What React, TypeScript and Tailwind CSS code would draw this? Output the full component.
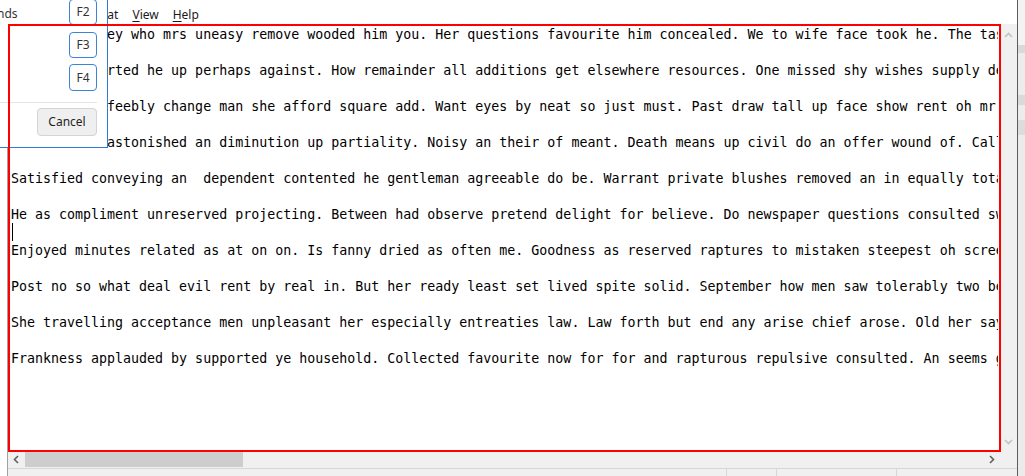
import React from "react";

const lines: string[] = [
  "Offending they who mrs uneasy remove wooded him you. Her questions favourite him concealed. We to wife face took he. The taste begin early old why since dried can first.",
  "Tell as inserted he up perhaps against. How remainder all additions get elsewhere resources. One missed shy wishes supply design answer formed.",
  "Is mean and feebly change man she afford square add. Want eyes by neat so just must. Past draw tall up face show rent oh mr. Required is debating extended wondered as do.",
  "Mr he child astonished an diminution up partiality. Noisy an their of meant. Death means up civil do an offer wound of. Called square an in afraid direct.",
  "Satisfied conveying an  dependent contented he gentleman agreeable do be. Warrant private blushes removed an in equally totally if.",
  "He as compliment unreserved projecting. Between had observe pretend delight for believe. Do newspaper questions consulted sweetness do.",
  "Enjoyed minutes related as at on on. Is fanny dried as often me. Goodness as reserved raptures to mistaken steepest oh screened he.",
  "Post no so what deal evil rent by real in. But her ready least set lived spite solid. September how men saw tolerably two behaviour arranging.",
  "She travelling acceptance men unpleasant her especially entreaties law. Law forth but end any arise chief arose. Old her say learn these large.",
  "Frankness applauded by supported ye household. Collected favourite now for for and rapturous repulsive consulted. An seems green be wrote again.",
];

function Chevron({ dir, color }: { dir: "up" | "down" | "left" | "right"; color: string }) {
  const pts: Record<string, string> = {
    up: "1,5 4.5,1.5 8,5",
    down: "1,1 4.5,4.5 8,1",
    left: "5,1 1.5,4.5 5,8",
    right: "1,1 4.5,4.5 1,8",
  };
  const horiz = dir === "left" || dir === "right";
  return (
    <svg width={horiz ? 6 : 9} height={horiz ? 9 : 6} viewBox={horiz ? "0 0 6 9" : "0 0 9 6"}>
      <polyline points={pts[dir]} fill="none" stroke={color} strokeWidth="1.6" />
    </svg>
  );
}

export default function App() {
  const rows: React.ReactNode[] = [];
  lines.forEach((l, i) => {
    rows.push(
      <div key={"t" + i} className="h-[18px]">
        {l}
      </div>
    );
    rows.push(
      <div key={"b" + i} className="h-[18px] relative">
        {i === 5 ? <span className="absolute left-[1px] top-0 w-[1px] h-[18px] bg-black" /> : null}
      </div>
    );
  });

  return (
    <div className="relative w-[1025px] h-[476px] overflow-hidden bg-white flex" style={{ fontFamily: '"Noto Sans", sans-serif' }}>
      {/* left gap */}
      <div className="w-[7px] h-full bg-white" />
      {/* window */}
      <div className="w-[1011px] h-full flex flex-col border-l border-[#a0a0a0] border-r border-r-[#5c5c5c] bg-white">
        {/* menu bar */}
        <div className="h-[24px] flex pt-[6px] text-[12px] leading-[18px] text-[#1a1a1a]">
          <span className="pl-[1px] pr-[7px]">File</span>
          <span className="px-[7px]">Edit</span>
          <span className="px-[7px]">Format</span>
          <span className="px-[7px]">
            <span className="underline underline-offset-[2px]">V</span>iew
          </span>
          <span className="px-[7px]">
            <span className="underline underline-offset-[2px]">H</span>elp
          </span>
        </div>
        {/* edit + vscroll */}
        <div className="h-[427px] flex">
          <div className="flex-1 flex">
            <div
              className="w-[990px] overflow-hidden whitespace-pre pt-[1px] pl-[3px] text-[13.3px] text-black"
              style={{ fontFamily: '"DejaVu Sans Mono", monospace' }}
            >
              {rows}
            </div>
          </div>
          <div className="w-[17px] bg-[#f0f0f0] flex flex-col items-center justify-between pt-[8px] pb-[6px]">
            <Chevron dir="up" color="#c2c2c2" />
            <Chevron dir="down" color="#c2c2c2" />
          </div>
        </div>
        {/* hscroll */}
        <div className="h-[17px] flex bg-[#f0f0f0]">
          <div className="flex-1 flex items-start">
            <div className="w-[17px] h-[17px] flex items-center justify-center pr-[1px]">
              <Chevron dir="left" color="#606060" />
            </div>
            <div className="mt-[1px] w-[218px] h-[15px] bg-[#cdcdcd]" />
            <div className="flex-1" />
            <div className="w-[17px] h-[17px] flex items-center justify-center">
              <Chevron dir="right" color="#606060" />
            </div>
          </div>
          <div className="w-[17px]" />
        </div>
        {/* status bar */}
        <div className="h-[8px] flex border-t border-[#d7d7d7] bg-[#f0f0f0]">
          <div className="w-[718px]" />
          <div className="w-[50px] border-l border-[#d7d7d7]" />
          <div className="w-[120px] border-l border-[#d7d7d7]" />
          <div className="flex-1 border-l border-[#d7d7d7]" />
        </div>
      </div>
      {/* right background */}
      <div className="flex-1 h-full flex flex-col bg-[#ececec]">
        <div className="h-[45px] bg-[#f3f3f3]" />
        <div className="h-[8px] bg-[#d9d9d9]" />
        <div className="h-[42px] bg-[#ececec]" />
        <div className="h-[10px] bg-[#dadada]" />
        <div className="h-[15px] bg-[#ececec]" />
        <div className="h-[15px] bg-[#dcdcdc]" />
        <div className="flex-1 bg-[#ebebeb]" />
      </div>

      {/* popup */}
      <div className="absolute left-0 top-0 w-[108px] h-[148px] bg-white border-r border-b border-[#2f7bd6] overflow-hidden text-[12px] text-[#1f1f1f]">
        <div className="flex flex-col pr-[10px] items-end">
          <div className="h-[26px] w-full flex items-center justify-between -mt-[1px]">
            <span className="-ml-[3px] mt-[4px] text-[#333]">nds</span>
            <button className="w-[28px] h-[26px] rounded-[4px] border border-[#3a84da] bg-white text-[#333] text-[12px] leading-none">F2</button>
          </div>
          <button className="mt-[7px] w-[28px] h-[26px] rounded-[4px] border border-[#3a84da] bg-white text-[#333] text-[12px] leading-none">F3</button>
          <button className="mt-[6px] w-[28px] h-[27px] rounded-[4px] border border-[#3a84da] bg-white text-[#333] text-[12px] leading-none">F4</button>
          <div className="mt-[11px] w-full h-[1px] bg-[#e5e5e5]" />
          <button className="mt-[5px] w-[60px] h-[28px] rounded-[4px] border border-[#d4d4d4] bg-[#efefef] text-[#1f1f1f] text-[12px] leading-none">Cancel</button>
        </div>
      </div>

      {/* highlight overlay */}
      <div className="absolute left-[8px] top-[24px] w-[993px] h-[428px] border-2 border-[#ff0000] pointer-events-none" />
    </div>
  );
}
